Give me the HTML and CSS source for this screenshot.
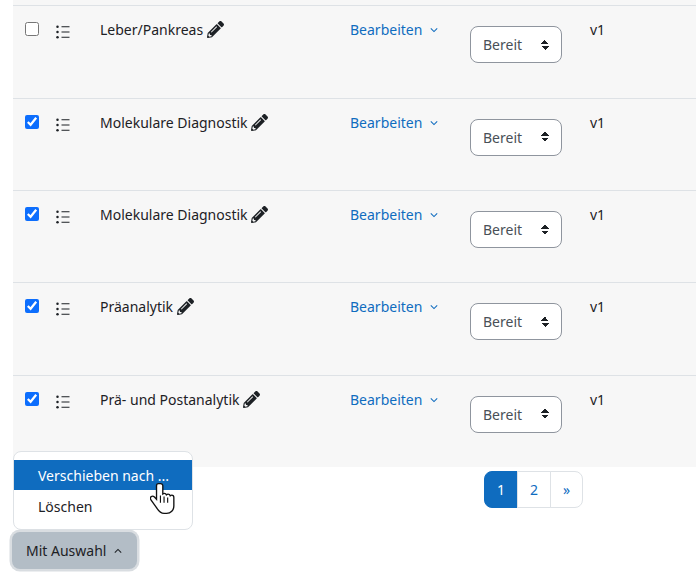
FILE: index.html
```html
<!DOCTYPE html>
<html lang="de">
<head>
    <meta charset="UTF-8">
    <title>Fragen</title>
    <link rel="stylesheet" href="styles.css">
</head>
<body>
    <svg class="sprites" width="0" height="0">
        <symbol id="pencil" viewBox="0 0 512 512">
            <path d="M497.900 142.100l-46.100 46.100c-4.700 4.700-12.300 4.700-17 0l-111-111c-4.700-4.700-4.700-12.300 0-17l46.100-46.100c18.700-18.700 49.100-18.700 67.900 0l60.100 60.100c18.800 18.700 18.800 49.100 0 67.900zM284.200 99.800L21.600 362.400.4 483.900c-2.900 16.400 11.400 30.600 27.800 27.800l121.500-21.300 262.600-262.600c4.700-4.700 4.700-12.300 0-17l-111-111c-4.800-4.700-12.400-4.700-17.100 0zM124.100 339.900c-5.500-5.500-5.500-14.300 0-19.800l154-154c5.500-5.500 14.300-5.500 19.800 0s5.500 14.300 0 19.800l-154 154c-5.500 5.500-14.300 5.500-19.800 0zM88 424h48v36.300l-64.500 11.300-31.100-31.100L51.700 376H88v48z"/>
        </symbol>
        <symbol id="grip" viewBox="0 0 14 14">
            <circle cx="1.500" cy="1.800" r="1.250"/>
            <circle cx="1.500" cy="7" r="1.250"/>
            <circle cx="1.500" cy="12.200" r="1.250"/>
            <path d="M5.500 1.300h8v1h-8zM5.500 6.500h8v1h-8zM5.500 11.700h8v1h-8z"/>
        </symbol>
        <symbol id="chevron" viewBox="0 0 10 6">
            <path d="M1 1l4 4 4-4" fill="none" stroke="currentColor" stroke-width="1.300"/>
        </symbol>
    </svg>

    <main class="list">
        <div class="row">
            <input type="checkbox" class="check">
            <svg class="grip"><use href="#grip"/></svg>
            <div class="name">Leber/Pankreas <svg class="pencil"><use href="#pencil"/></svg></div>
            <a class="edit">Bearbeiten <svg class="chevron"><use href="#chevron"/></svg></a>
            <div class="select">Bereit <span class="arrows"></span></div>
            <div class="version">v1</div>
        </div>
        <div class="row">
            <input type="checkbox" class="check" checked>
            <svg class="grip"><use href="#grip"/></svg>
            <div class="name">Molekulare Diagnostik <svg class="pencil"><use href="#pencil"/></svg></div>
            <a class="edit">Bearbeiten <svg class="chevron"><use href="#chevron"/></svg></a>
            <div class="select">Bereit <span class="arrows"></span></div>
            <div class="version">v1</div>
        </div>
        <div class="row">
            <input type="checkbox" class="check" checked>
            <svg class="grip"><use href="#grip"/></svg>
            <div class="name">Molekulare Diagnostik <svg class="pencil"><use href="#pencil"/></svg></div>
            <a class="edit">Bearbeiten <svg class="chevron"><use href="#chevron"/></svg></a>
            <div class="select">Bereit <span class="arrows"></span></div>
            <div class="version">v1</div>
        </div>
        <div class="row">
            <input type="checkbox" class="check" checked>
            <svg class="grip"><use href="#grip"/></svg>
            <div class="name">Präanalytik <svg class="pencil"><use href="#pencil"/></svg></div>
            <a class="edit">Bearbeiten <svg class="chevron"><use href="#chevron"/></svg></a>
            <div class="select">Bereit <span class="arrows"></span></div>
            <div class="version">v1</div>
        </div>
        <div class="row">
            <input type="checkbox" class="check" checked>
            <svg class="grip"><use href="#grip"/></svg>
            <div class="name">Prä- und Postanalytik <svg class="pencil"><use href="#pencil"/></svg></div>
            <a class="edit">Bearbeiten <svg class="chevron"><use href="#chevron"/></svg></a>
            <div class="select">Bereit <span class="arrows"></span></div>
            <div class="version">v1</div>
        </div>
    </main>

    <div class="pager-line">
        <div class="pagination">
            <a class="page active">1</a>
            <a class="page">2</a>
            <a class="page next">»</a>
        </div>
    </div>

    <div class="actions">
        <div class="menu">
            <div class="menu-item active">Verschieben nach ...</div>
            <div class="menu-item">Löschen</div>
        </div>
        <button class="action-btn">Mit Auswahl <svg class="chevron up"><use href="#chevron"/></svg></button>
        <svg class="cursor" viewBox="0 0 24 32">
            <path d="M8.200 1.500c-1.200 0-2 .9-2 2.100v13.200l-2-2.200c-1-1-2.400-1.100-3.300-.3-.8.800-.8 2-.1 3l5.200 7.300c1.300 1.900 3.300 5.900 7.500 5.900h2.500c4 0 7-3.100 7-7.200v-8.300c0-1.300-.9-2.200-2-2.200-.6 0-1.100.2-1.500.6-.3-1-1.100-1.600-2.100-1.600-.7 0-1.200.3-1.600.7-.4-.9-1.200-1.400-2-1.400-.6 0-1.100.2-1.500.5V3.600c0-1.200-.9-2.100-2.100-2.100z" fill="#fff" stroke="#111" stroke-width="1.300"/>
            <path d="M10 13v7M13.500 14v6M17 15v5" fill="none" stroke="#111" stroke-width="1.100"/>
        </svg>
    </div>
</body>
</html>
```

FILE: styles.css
```css
* {
    box-sizing: border-box;
}

html, body {
    height: 100%;
}

body {
    margin: 0;
    padding-left: 13px;
    overflow: hidden;
    background-color: #fff;
    color: #1d2125;
    font-family: "Noto Sans", sans-serif;
    font-size: 14px;
    line-height: 21px;
}

.sprites {
    position: absolute;
}

.list {
    background-color: #f7f7f7;
    padding-top: 5.3px;
}

.row {
    display: grid;
    grid-template-columns: 31px 44px 250px 120px 120px 1fr;
    align-items: start;
    height: 92.4px;
    padding: 13px 0 0 12px;
    border-top: 1px solid #dee2e6;
}

.check {
    width: 14px;
    height: 14px;
    margin: 3px 0 0;
    accent-color: #0d6efd;
}

.grip {
    width: 14px;
    height: 14px;
    margin-top: 6px;
    fill: #1d2125;
}

.pencil {
    width: 17px;
    height: 17px;
    vertical-align: -3px;
    fill: #1d2125;
}

.edit {
    color: #0f6cbf;
}

.chevron {
    width: 8px;
    height: 6px;
    margin-left: 4px;
    vertical-align: 2px;
}

.select {
    display: flex;
    justify-content: space-between;
    align-items: center;
    width: 92px;
    height: 37px;
    margin-top: 7px;
    padding: 0 12px;
    border: 1px solid #8f959e;
    border-radius: 8px;
    background-color: #fff;
    color: #495057;
}

.arrows {
    width: 8px;
    height: 10px;
    background:
        linear-gradient(to top right, transparent 50%, #1d2125 50%) 0 6px / 4px 4px no-repeat,
        linear-gradient(to top left, transparent 50%, #1d2125 50%) 4px 6px / 4px 4px no-repeat,
        linear-gradient(to bottom right, transparent 50%, #1d2125 50%) 0 0 / 4px 4px no-repeat,
        linear-gradient(to bottom left, transparent 50%, #1d2125 50%) 4px 0 / 4px 4px no-repeat;
}

.pager-line {
    display: flex;
    padding: 4px 0 0 471px;
}

.pagination {
    display: flex;
    height: 37px;
}

.page {
    display: flex;
    justify-content: center;
    align-items: center;
    width: 34px;
    margin-left: -1px;
    border: 1px solid #dee2e6;
    background-color: #fff;
    color: #0f6cbf;
}

.page.active {
    margin-left: 0;
    border-color: #0f6cbf;
    border-radius: 8px 0 0 8px;
    background-color: #0f6cbf;
    color: #fff;
}

.page.next {
    width: 33px;
    border-radius: 0 8px 8px 0;
}

.menu {
    position: absolute;
    left: 13px;
    top: 451px;
    width: 180px;
    height: 79px;
    padding: 8px 0;
    border: 1px solid #dee2e6;
    border-radius: 8px;
    background-color: #fff;
}

.menu-item {
    height: 31px;
    padding: 5px 0 5px 24px;
    white-space: nowrap;
}

.menu-item.active {
    height: 30px;
    margin-bottom: 1px;
    background-color: #0f6cbf;
    color: #fff;
}

.action-btn {
    position: absolute;
    left: 12px;
    top: 532px;
    height: 37px;
    width: 125px;
    padding: 0 14px;
    border: none;
    border-radius: 8px;
    box-shadow: 0 0 0 2.5px #d9dde1;
    background-color: #b3bdc6;
    color: #1d2125;
    font: inherit;
    text-align: left;
    white-space: nowrap;
}

.chevron.up {
    transform: rotate(180deg);
}

.cursor {
    position: absolute;
    left: 150px;
    top: 482px;
    width: 25px;
    height: 33px;
}
```
